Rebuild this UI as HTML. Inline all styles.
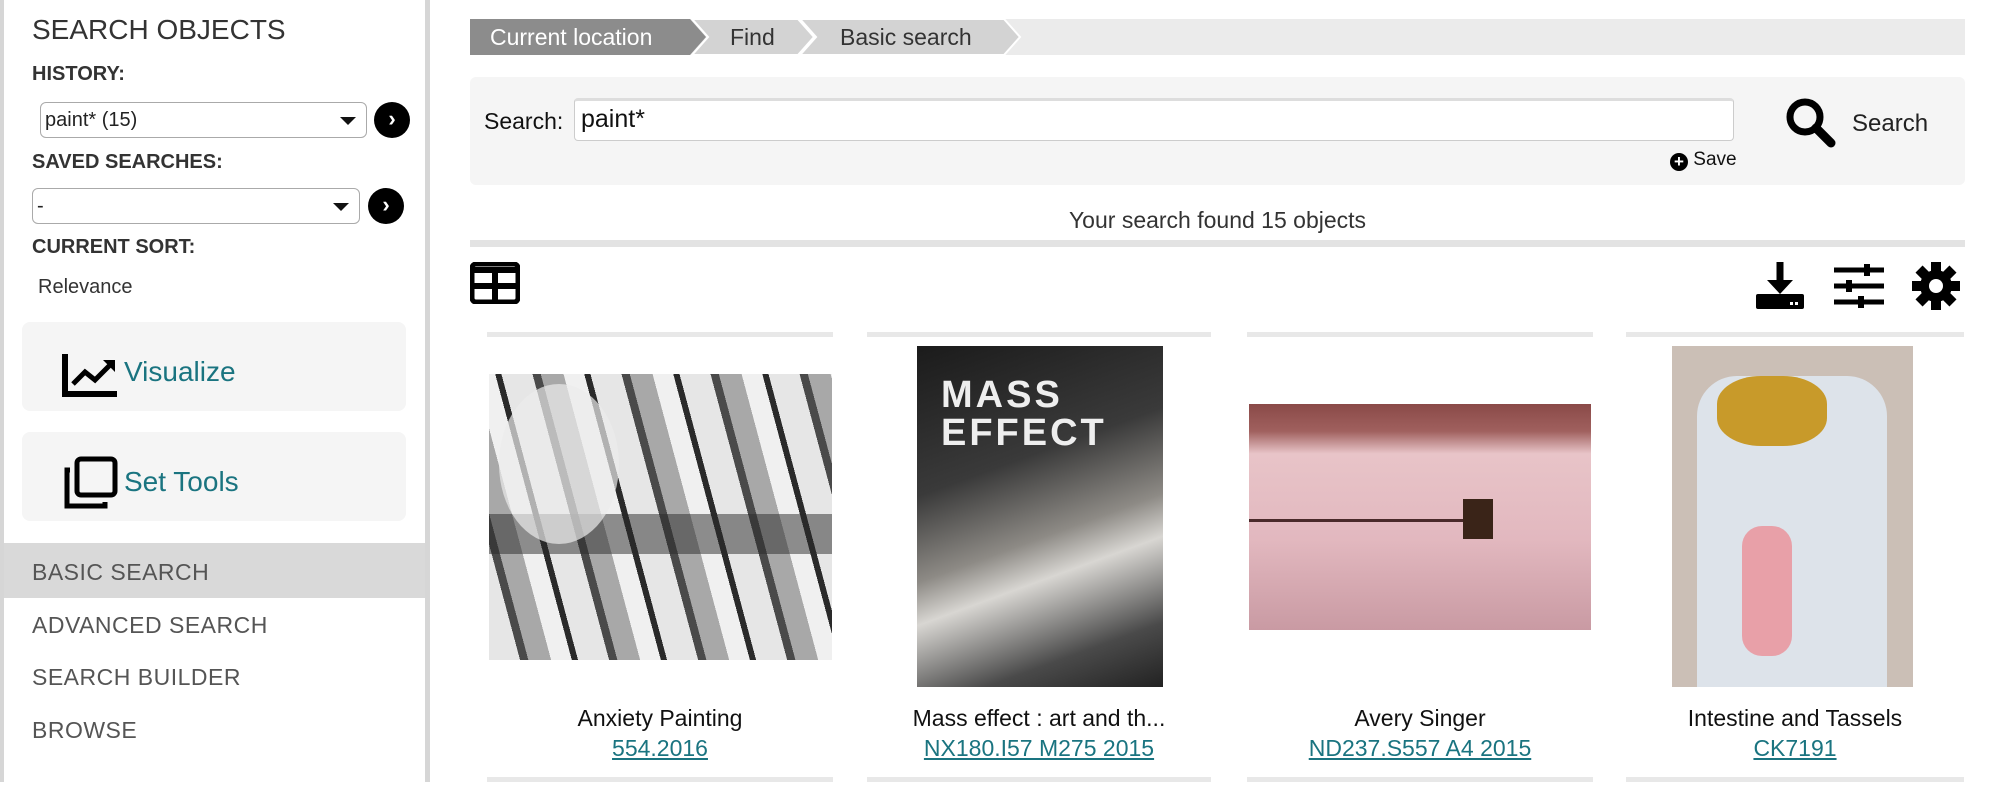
<!DOCTYPE html>
<html><head><meta charset="utf-8"><style>
*{margin:0;padding:0;box-sizing:border-box}
body{width:1993px;height:782px;overflow:hidden;background:#fff;font-family:"Liberation Sans",sans-serif;color:#222;position:relative}
.a{position:absolute}
.sb{left:0;top:0;width:430px;height:782px;border-left:4px solid #d6d6d6;border-right:5px solid #d6d6d6}
.lbl{font-weight:bold;font-size:20px;color:#333;left:32px}
.sel{border:1px solid #aaa;border-radius:6px;background:#fff;font-size:20px;padding:3px 4px;height:36px;line-height:28px}
.sel:after{content:"";position:absolute;right:10px;top:14px;border-left:8px solid transparent;border-right:8px solid transparent;border-top:8px solid #111}
.go{width:36px;height:36px;border-radius:50%;background:#000;color:#fff;font-size:22px;font-weight:bold;text-align:center;line-height:34px}
.tool{left:22px;width:384px;height:89px;background:#f5f5f5;border-radius:8px}
.tool span{position:absolute;left:102px;top:34px;font-size:28px;color:#1a7480}
.nav{left:32px;font-size:23px;color:#555;letter-spacing:.5px}
.card{border-top:5px solid #e8e8e8;text-align:center}
.t{font-size:23px;color:#111}
.l{font-size:23px;color:#1a7480;text-decoration:underline}
</style></head><body>
<div class="a sb"></div>
<div class="a" style="left:32px;top:14px;font-size:28px;color:#333">SEARCH OBJECTS</div>
<div class="a lbl" style="top:63px">HISTORY:</div>
<div class="a sel" style="left:40px;top:102px;width:327px">paint* (15)</div>
<div class="a go" style="left:374px;top:102px">›</div>
<div class="a lbl" style="top:151px">SAVED SEARCHES:</div>
<div class="a sel" style="left:32px;top:188px;width:328px">-</div>
<div class="a go" style="left:368px;top:188px">›</div>
<div class="a lbl" style="top:236px">CURRENT SORT:</div>
<div class="a" style="left:38px;top:276px;font-size:20px;color:#333">Relevance</div>
<div class="a tool" style="top:322px">
<svg class="a" style="left:39px;top:30px" width="58" height="46" viewBox="0 0 58 46"><path d="M4 2V42H56" fill="none" stroke="#000" stroke-width="6"/><path d="M12 32L24 20L34 28L50 12" fill="none" stroke="#000" stroke-width="5"/><path d="M42 8H54V20Z" fill="#000"/></svg>
<span>Visualize</span></div>
<div class="a tool" style="top:432px">
<svg class="a" style="left:39px;top:24px" width="58" height="56" viewBox="0 0 58 56"><rect x="16" y="3" width="38" height="36" rx="4" fill="none" stroke="#000" stroke-width="5"/><path d="M9 14H6V50H44V46" fill="none" stroke="#000" stroke-width="5"/></svg>
<span>Set Tools</span></div>
<div class="a" style="left:4px;top:543px;width:421px;height:55px;background:#d9d9d9"></div>
<div class="a nav" style="top:559px">BASIC SEARCH</div>
<div class="a nav" style="top:612px">ADVANCED SEARCH</div>
<div class="a nav" style="top:664px">SEARCH BUILDER</div>
<div class="a nav" style="top:717px">BROWSE</div>

<div class="a" style="left:470px;top:19px;width:1495px;height:36px;background:#ebebeb"></div>
<svg class="a" style="left:470px;top:19px" width="560" height="36"><polygon points="0,0 220,0 236,18 220,36 0,36" fill="#8c8c8c"/><polygon points="222,0 328,0 344,18 328,36 222,36 238,18" fill="#d3d3d3" stroke="#fff" stroke-width="2"/><polygon points="330,0 534,0 550,18 534,36 330,36 346,18" fill="#d3d3d3" stroke="#fff" stroke-width="2"/></svg>
<div class="a" style="left:490px;top:24px;font-size:23px;color:#fff">Current location</div>
<div class="a" style="left:730px;top:24px;font-size:23px;color:#333">Find</div>
<div class="a" style="left:840px;top:24px;font-size:23px;color:#333">Basic search</div>

<div class="a" style="left:470px;top:77px;width:1495px;height:108px;background:#f5f5f5;border-radius:6px"></div>
<div class="a" style="left:484px;top:108px;font-size:23px;color:#111">Search:</div>
<div class="a" style="left:574px;top:98px;width:1160px;height:43px;background:#fff;border:1px solid #ccc;border-top:3px solid #ddd;border-radius:4px;font-size:25px;padding:4px 6px;color:#111">paint*</div>
<div class="a" style="left:1670px;top:149px;font-size:19px;color:#111"><span style="display:inline-block;width:18px;height:18px;border-radius:50%;background:#000;color:#fff;font-size:17px;line-height:18px;text-align:center;font-weight:bold;vertical-align:-2px">+</span> Save</div>
<svg class="a" style="left:1784px;top:96px" width="52" height="52" viewBox="0 0 52 52"><circle cx="21" cy="21" r="15" fill="none" stroke="#000" stroke-width="7"/><path d="M32 32L47 47" stroke="#000" stroke-width="9" stroke-linecap="round"/></svg>
<div class="a" style="left:1852px;top:110px;font-size:24px;color:#222">Search</div>

<div class="a" style="left:470px;top:207px;width:1495px;text-align:center;font-size:23px;color:#333">Your search found 15 objects</div>
<div class="a" style="left:470px;top:240px;width:1495px;height:7px;background:#e3e3e3"></div>
<svg class="a" style="left:470px;top:262px" width="50" height="42" viewBox="0 0 50 42"><rect x="2" y="2" width="46" height="38" rx="4" fill="none" stroke="#000" stroke-width="5"/><path d="M2 8H48M25 8V40M2 24H48" stroke="#000" stroke-width="6"/></svg>
<svg class="a" style="left:1755px;top:260px" width="50" height="50" viewBox="0 0 50 50"><path d="M25 2V30" stroke="#000" stroke-width="7"/><path d="M12 20L25 34L38 20Z" fill="#000"/><rect x="1" y="34" width="48" height="15" rx="2" fill="#000"/><rect x="35" y="42" width="3" height="3" fill="#fff"/><rect x="40" y="42" width="3" height="3" fill="#fff"/></svg>
<svg class="a" style="left:1834px;top:264px" width="50" height="44" viewBox="0 0 50 44"><path d="M0 6H50M0 22H50M0 38H50" stroke="#000" stroke-width="5"/><rect x="30" y="0" width="6" height="12" fill="#000"/><rect x="12" y="16" width="6" height="12" fill="#000"/><rect x="24" y="32" width="6" height="12" fill="#000"/></svg>
<svg class="a" style="left:1912px;top:262px" width="48" height="48" viewBox="0 0 48 48"><g fill="#000"><circle cx="24" cy="24" r="16"/><rect x="19" y="0" width="10" height="48"/><rect x="0" y="19" width="48" height="10"/><rect x="19" y="0" width="10" height="48" transform="rotate(45 24 24)"/><rect x="19" y="0" width="10" height="48" transform="rotate(-45 24 24)"/></g><circle cx="24" cy="24" r="7" fill="#fff"/></svg>

<div class="a card" style="left:487px;top:332px;width:346px;height:460px"></div>
<div class="a card" style="left:867px;top:332px;width:344px;height:460px"></div>
<div class="a card" style="left:1247px;top:332px;width:346px;height:460px"></div>
<div class="a card" style="left:1626px;top:332px;width:338px;height:460px"></div>
<div class="a" style="left:487px;top:777px;width:1477px;height:5px;background:linear-gradient(90deg,#e8e8e8 0 346px,#fff 346px 380px,#e8e8e8 380px 724px,#fff 724px 760px,#e8e8e8 760px 1106px,#fff 1106px 1139px,#e8e8e8 1139px)"></div>

<div class="a" style="left:489px;top:374px;width:343px;height:286px;background:#bdbdbd;overflow:hidden">
<div style="position:absolute;left:0;top:0;width:343px;height:286px;background:repeating-linear-gradient(75deg,#e6e6e6 0 30px,#4a4a4a 30px 38px,#a8a8a8 38px 60px,#f0f0f0 60px 80px,#2a2a2a 80px 86px)"></div>
<div style="position:absolute;left:0;top:140px;width:343px;height:40px;background:rgba(40,40,40,.5)"></div>
<div style="position:absolute;left:10px;top:10px;width:120px;height:160px;border-radius:50%;background:rgba(235,235,235,.7)"></div></div>
<div class="a" style="left:917px;top:346px;width:246px;height:341px;background:linear-gradient(160deg,#1b1b1b 0,#3a3a3a 35%,#8d8a85 55%,#d8d6d2 65%,#4a4a4a 85%,#222 100%)"><div style="position:absolute;left:24px;top:30px;color:#eee;font-size:38px;font-weight:bold;line-height:38px;letter-spacing:3px">MASS<br>EFFECT</div></div>
<div class="a" style="left:1249px;top:404px;width:342px;height:226px;background:linear-gradient(180deg,#8a4a48 0,#a0605e 12%,#e8c4c8 22%,#e2b8bf 60%,#c99aa3 100%)"><div style="position:absolute;left:214px;top:95px;width:30px;height:40px;background:#3a2418"></div><div style="position:absolute;left:0;top:115px;width:214px;height:3px;background:#4a2a2a"></div></div>
<div class="a" style="left:1672px;top:346px;width:241px;height:341px;background:#cbbfb6"><div style="position:absolute;left:25px;top:30px;width:190px;height:311px;background:#dde3ea;border-radius:40px 40px 0 0"></div><div style="position:absolute;left:45px;top:30px;width:110px;height:70px;background:#c89a2a;border-radius:40%"></div><div style="position:absolute;left:70px;top:180px;width:50px;height:130px;background:#e8a0a8;border-radius:20px"></div></div>

<div class="a t" style="left:487px;top:705px;width:346px;text-align:center">Anxiety Painting</div>
<div class="a l" style="left:487px;top:735px;width:346px;text-align:center">554.2016</div>
<div class="a t" style="left:867px;top:705px;width:344px;text-align:center">Mass effect : art and th...</div>
<div class="a l" style="left:867px;top:735px;width:344px;text-align:center">NX180.I57 M275 2015</div>
<div class="a t" style="left:1247px;top:705px;width:346px;text-align:center">Avery Singer</div>
<div class="a l" style="left:1247px;top:735px;width:346px;text-align:center">ND237.S557 A4 2015</div>
<div class="a t" style="left:1626px;top:705px;width:338px;text-align:center">Intestine and Tassels</div>
<div class="a l" style="left:1626px;top:735px;width:338px;text-align:center">CK7191</div>
</body></html>
